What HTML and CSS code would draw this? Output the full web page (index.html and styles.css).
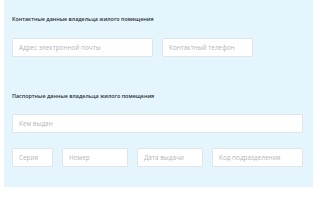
FILE: index.html
```html
<!DOCTYPE html>
<html lang="ru">
<head>
    <meta charset="UTF-8">
    <title>Данные владельца</title>
    <link rel="stylesheet" href="styles.css">
</head>
<body>
    <form class="owner-form">
        <div class="section-title">Контактные данные владельца жилого помещения</div>
        <div class="row row-contacts">
            <input class="field" type="text" placeholder="Адрес электронной почты">
            <input class="field" type="text" placeholder="Контактный телефон">
        </div>

        <div class="section-title section-passport">Паспортные данные владельца жилого помещения</div>
        <div class="row row-issuer">
            <input class="field" type="text" placeholder="Кем выдан">
        </div>
        <div class="row row-passport">
            <input class="field" type="text" placeholder="Серия">
            <input class="field" type="text" placeholder="Номер">
            <input class="field" type="text" placeholder="Дата выдачи">
            <input class="field" type="text" placeholder="Код подразделения">
        </div>
    </form>
</body>
</html>
```

FILE: styles.css
```css
* {
    margin: 0;
    padding: 0;
    box-sizing: border-box;
    font-family: "Open Sans", "Liberation Sans", sans-serif;
}

body {
    background: #ffffff;
    width: 320px;
    height: 200px;
    overflow: hidden;
}

.owner-form {
    margin-left: 4px;
    width: 309px;
    height: 187px;
    background: #e4f5fd;
    padding: 15px 10px 20px 8px;
    display: flex;
    flex-direction: column;
}

.section-title {
    height: 8px;
    line-height: 8px;
    font-size: 5.4px;
    font-weight: 600;
    color: #2b2f33;
    white-space: nowrap;
}

.section-passport {
    margin-top: 35px;
}

.row {
    display: grid;
    column-gap: 9px;
}

.row-contacts {
    margin-top: 15px;
    grid-template-columns: 141px 91px;
}

.row-issuer {
    margin-top: 14px;
    grid-template-columns: 1fr;
}

.row-passport {
    margin-top: 15px;
    grid-template-columns: 41px 66px 66px 91px;
}

.field {
    height: 19px;
    background: #ffffff;
    border: 1px solid #dfe6ea;
    border-radius: 1px;
    padding: 0 6px;
    font-size: 6.4px;
    color: #555;
    outline: none;
}

.field::placeholder {
    color: #b2b6b9;
}
```
